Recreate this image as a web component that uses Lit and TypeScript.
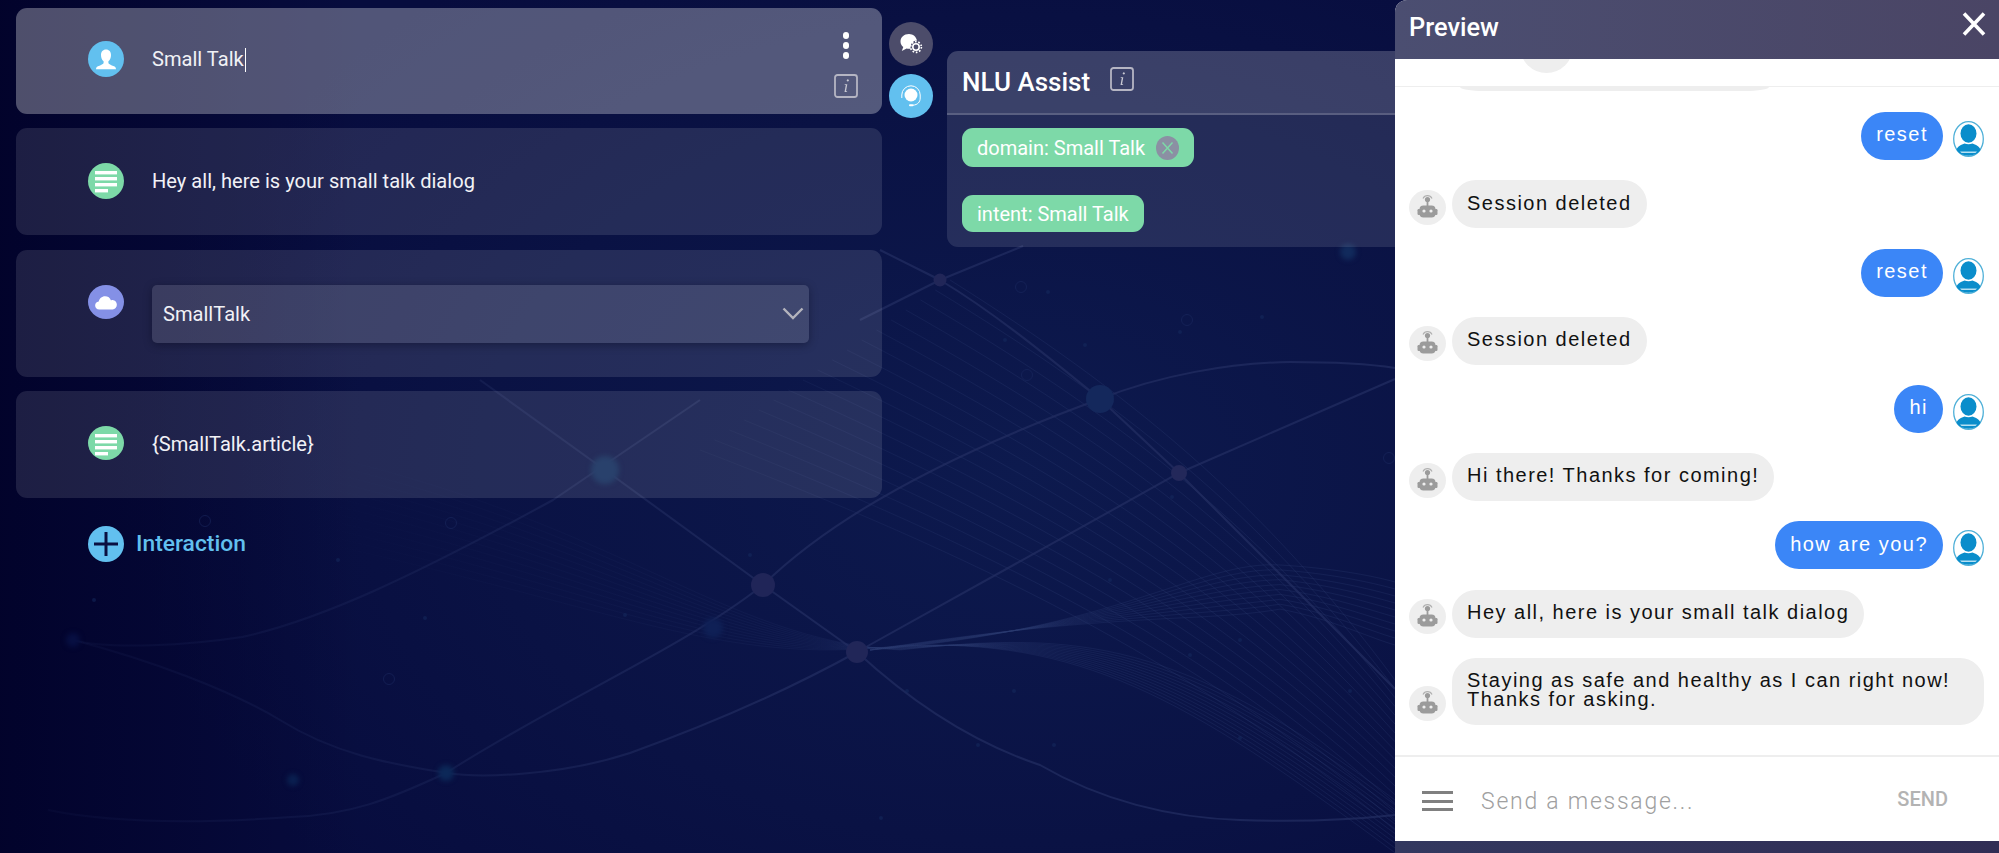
import { LitElement, css, html, svg } from "lit";
import { customElement } from "lit/decorators.js";

interface Message {
  from: "user" | "bot";
  text: string;
}

const MESSAGES: Message[] = [
  { from: "user", text: "reset" },
  { from: "bot", text: "Session deleted" },
  { from: "user", text: "reset" },
  { from: "bot", text: "Session deleted" },
  { from: "user", text: "hi" },
  { from: "bot", text: "Hi there! Thanks for coming!" },
  { from: "user", text: "how are you?" },
  { from: "bot", text: "Hey all, here is your small talk dialog" },
  { from: "bot", text: "Staying as safe and healthy as I can right now! Thanks for asking." },
];

// main lines of the network picture behind the page
const NET_LINES = [
  "M446 773C560 700 680 650 763 585C840 510 960 450 1100 399",
  "M446 773C480 778 560 776 630 753C680 735 770 700 857 652",
  "M446 773C388 800 350 815 291 817C220 822 121 825 48 810",
  "M446 773C400 765 339 757 280 720C230 690 150 660 73 640",
  "M73 640C110 650 190 645 242 637C320 620 412 577 553 500L700 400",
  "M857 652L1179 473L1395 379",
  "M1100 399C1160 375 1230 363 1290 362C1330 362 1370 364 1395 368",
  "M1100 399C1040 350 990 310 940 280L880 250",
  "M860 320L940 280L1023 246",
  "M1100 399L1179 473L1395 689",
  "M857 652C920 710 980 745 1040 765C1100 800 1170 818 1240 820C1300 822 1350 820 1395 815",
  "M763 585L857 652",
  "M763 585L605 470L480 380",
];

const NET_NODES = [
  { x: 1100, y: 399, r: 14, c: "#14285c" },
  { x: 1179, y: 473, r: 8, c: "#23285a" },
  { x: 763, y: 585, r: 12, c: "#202558" },
  { x: 857, y: 652, r: 11, c: "#212658" },
  { x: 940, y: 280, r: 6.5, c: "#212658" },
];

const GLOWS = [
  { x: 446, y: 773, r: 8, c: "#0c2858" },
  { x: 605, y: 470, r: 14, c: "#0f2a5a" },
  { x: 713, y: 628, r: 10, c: "#0f2056" },
  { x: 1348, y: 252, r: 8, c: "#112a5c" },
  { x: 293, y: 780, r: 6, c: "#0a2050" },
  { x: 73, y: 640, r: 7, c: "#070f42" },
];

const RINGS = [
  [1021, 287], [1027, 375], [1187, 320], [1389, 458], [205, 521], [389, 679], [451, 523],
];

const SPECKS = [
  [750, 555], [625, 615], [907, 691], [1014, 691], [1054, 745], [1350, 691],
  [1240, 738], [881, 818], [978, 745], [1240, 640], [1190, 655], [1110, 580],
  [1180, 332], [1048, 292], [1085, 345], [1005, 340], [1262, 317], [1172, 497],
  [338, 560], [94, 600], [425, 618],
];

const fan = () => {
  const paths: string[] = [];
  // long lines that converge towards the lower right
  for (let i = 0; i < 18; i++) {
    const s = i / 17;
    const x0 = 700 + s * 250;
    const y0 = 450 - s * 170;
    const y1 = 830 - s * 150;
    const dx = 1395 - x0;
    const dy = y1 - y0;
    paths.push(`M${x0} ${y0}C${x0 + 0.4 * dx} ${y0 + 0.28 * dy} ${x0 + 0.7 * dx} ${y0 + 0.55 * dy} 1395 ${y1}`);
  }
  for (let i = 0; i < 12; i++) {
    const t = i * 8;
    paths.push(`M300 ${450 + t}C620 ${520 + t} 720 ${640 + t * 0.3} 900 ${650 - t * 0.05}C1080 ${630 + t * 0.1} 1180 ${640 + t * 0.6} 1395 ${800 + t * 0.6}`);
  }
  for (let i = 0; i < 10; i++) {
    const t = i * 7;
    paths.push(`M870 650C1120 ${630 - t * 0.3} 1200 ${560 + t} 1280 ${565 + t * 0.7}C1330 ${568 + t * 0.8} 1370 ${575 + t} 1395 ${582 + t}`);
  }
  return paths;
};

const userSilhouette = html`<svg viewBox="0 0 36 36" width="36" height="36">
  <path fill="#fff" d="M18 8.500c-3.200 0-5 2.400-5 5.400 0 2.700 1 5 2.600 6.300v1.700c0 1-2.700 2.200-5.600 3.300-1.500.6-2 1.800-2 3.100h20c0-1.300-.5-2.500-2-3.100-2.900-1.100-5.600-2.300-5.600-3.300v-1.700c1.600-1.300 2.600-3.600 2.600-6.300 0-3-1.800-5.400-5-5.400z"/>
</svg>`;

const textLines = html`<svg viewBox="0 0 36 36" width="36" height="36" fill="#fff">
  <rect x="7" y="8" width="22" height="3.400"/><rect x="7" y="14" width="22" height="3.400"/>
  <rect x="7" y="20" width="22" height="3.400"/><rect x="7" y="26" width="13" height="3.400"/>
</svg>`;

const cloud = html`<svg viewBox="0 0 36 36" width="36" height="34">
  <path fill="#fff" d="M11 26c-3 0-4.500-2-4.500-4.200 0-2.200 1.500-4 3.800-4.200C11 14.500 13.500 12 17 12c3 0 5.400 1.700 6.300 4.300.5-.2 1-.3 1.700-.3 2.800 0 4.500 2.300 4.500 5 0 2.800-2 5-4.500 5z"/>
</svg>`;

const infoBox = html`<svg viewBox="0 0 24 24" width="24" height="24">
  <rect x="1" y="1" width="22" height="22" rx="2.500" fill="none" stroke="#b5b5c3" stroke-width="1.800"/>
  <path fill="#c9c9d3" d="M12.700 6.400a1.100 1.100 0 1 1 0 .01zM10.800 10.200h2.500l-1.300 7h1.200l-.2.900h-2.500l1.300-7h-1.200z"/>
</svg>`;

const botAvatar = html`<svg viewBox="0 0 37 35" width="37" height="35">
  <ellipse cx="18.500" cy="17.500" rx="18.500" ry="17.500" fill="#eeeeee"/>
  <g fill="#9b9b9b">
    <circle cx="18.500" cy="9.500" r="2.600"/>
    <rect x="17.600" y="10" width="1.800" height="6"/>
    <rect x="10.500" y="15.500" width="16" height="12" rx="4"/>
    <rect x="8.500" y="19" width="3" height="6" rx="1.200"/>
    <rect x="25.500" y="19" width="3" height="6" rx="1.200"/>
  </g>
  <path d="M14 8.500a5 5 0 0 1 9 0" fill="none" stroke="#b0b0b0" stroke-width="1.200"/>
  <circle cx="15" cy="21" r="1.600" fill="#eee"/><circle cx="22" cy="21" r="1.600" fill="#eee"/>
</svg>`;

const userAvatar = html`<svg viewBox="0 0 31 36" width="31" height="36">
  <ellipse cx="15.500" cy="18" rx="14.800" ry="17.300" fill="#fff" stroke="#4fb0d8" stroke-width="1.300"/>
  <ellipse cx="15.500" cy="12.500" rx="8" ry="9.300" fill="#0a8dcb"/>
  <path fill="#0a8dcb" d="M3.500 29c1-4 5-5.500 8-6.500 2.500 1 5.500 1 8 0 3 1 7 2.500 8 6.500-2.500 3.700-7 5.700-12 5.700s-9.500-2-12-5.700z"/>
  <path fill="#b6e0f2" d="M7 30.500h17l-1.500 1.400H8.500z"/>
</svg>`;

@customElement("app-root")
export class AppRoot extends LitElement {
  static styles = css`
    :host {
      display: block;
      width: 1999px;
      height: 853px;
      font-family: Roboto, "Liberation Sans", sans-serif;
      color: #f1f1f6;
    }
    .page {
      position: relative;
      display: flex;
      width: 1999px;
      height: 853px;
      overflow: hidden;
      background:
        linear-gradient(90deg, rgba(1, 1, 40, 0.85) 0, rgba(1, 1, 40, 0) 360px),
        radial-gradient(ellipse 900px 620px at 1020px 470px, #0d1a4e 0, #0a1244 60%, #070c3e 100%);
    }
    .net {
      position: absolute;
      inset: 0;
    }
    .glow {
      filter: blur(2.500px);
    }
    .flows {
      position: relative;
      width: 866px;
      margin: 8px 7px 0 16px;
      flex: none;
    }
    .card {
      display: flex;
      align-items: flex-start;
      gap: 28px;
      padding: 35px 24px 36px 72px;
      margin-bottom: 14.3px;
      border-radius: 11px;
      background: rgba(255, 255, 255, 0.11);
      font-size: 20.100px;
      line-height: 36px;
    }
    .card.active {
      padding-top: 33px;
      padding-bottom: 37px;
      background: rgba(255, 255, 255, 0.3);
    }
    .card.select-card {
      padding-bottom: 34px;
    }
    .dot {
      flex: none;
      width: 36px;
      height: 36px;
      border-radius: 50%;
      overflow: hidden;
    }
    .dot.short {
      height: 34px;
    }
    .blue { background: #62c0ef; }
    .green { background: #7dd9a8; }
    .violet { background: #8490e6; }
    .caret {
      display: inline-block;
      width: 1px;
      height: 24px;
      margin-left: 1px;
      background: #fff;
      vertical-align: -6px;
    }
    .actions {
      display: flex;
      flex-direction: column;
      align-items: center;
      gap: 14px;
      height: 36px;
      margin: -9px 0 0 auto;
    }
    .kebab {
      display: flex;
      flex-direction: column;
      gap: 3.500px;
      padding: 0;
    }
    .kebab i {
      width: 6.500px;
      height: 6.500px;
      border-radius: 50%;
      background: #fff;
    }
    .info { display: block; width: 24px; height: 24px; }
    .select {
      flex: none;
      display: flex;
      align-items: center;
      justify-content: space-between;
      width: 657px;
      height: 58px;
      padding: 0 5px 0 11px;
      box-sizing: border-box;
      border-radius: 5px;
      background: rgba(255, 255, 255, 0.12);
      box-shadow: 0 2px 8px rgba(0, 0, 20, 0.35);
    }
    .add {
      display: flex;
      align-items: center;
      gap: 12px;
      margin: 28px 0 0 72px;
      font-size: 22.800px;
      font-weight: 500;
      color: #62c0ef;
    }
    .add svg { display: block; }
    .side {
      position: relative;
      flex: none;
      display: flex;
      flex-direction: column;
      gap: 8px;
      margin-top: 22px;
    }
    .round {
      display: flex;
      align-items: center;
      justify-content: center;
      width: 44px;
      height: 44px;
      border-radius: 50%;
    }
    .round.gray { background: #4c4c6a; }
    .nlu {
      position: relative;
      flex: 1;
      height: 196px;
      margin: 51px -14px 0 14px;
      border-radius: 11px;
      background: rgba(255, 255, 255, 0.11);
      overflow: hidden;
    }
    .nlu-head {
      display: flex;
      align-items: flex-start;
      height: 62px;
      padding-left: 15px;
      background: rgba(255, 255, 255, 0.1);
      border-bottom: 2px solid rgba(255, 255, 255, 0.16);
    }
    .nlu-head h2 {
      margin: 0;
      font-size: 26px;
      font-weight: 500;
      line-height: 62px;
      color: #fff;
    }
    .nlu-head .info { margin: 16px 0 0 20px; }
    .chips {
      display: flex;
      flex-direction: column;
      align-items: flex-start;
      gap: 28px;
      padding: 13px 0 0 15px;
    }
    .chip {
      display: flex;
      align-items: center;
      gap: 11px;
      height: 39px;
      padding: 0 15px 0 15px;
      border-radius: 11px;
      background: #7dd9a8;
      font-size: 20px;
      color: #fff;
    }
    .chip.plain {
      height: 37px;
    }
    .chip svg { display: block; }
    .panel {
      position: relative;
      flex: none;
      display: flex;
      flex-direction: column;
      width: 604px;
      height: 853px;
      margin-left: auto;
      background: #fff;
      border-top-left-radius: 12px;
      overflow: hidden;
    }
    .panel-head {
      flex: none;
      display: flex;
      align-items: flex-start;
      justify-content: space-between;
      height: 59px;
      padding: 0 13px 0 14px;
      box-sizing: border-box;
      background: linear-gradient(90deg, #4b4e71, #4a4565);
      color: #fff;
      font-size: 25.400px;
      font-weight: 500;
      line-height: 55px;
    }
    .panel-head svg { display: block; margin-top: 12px; }
    .stub {
      flex: none;
      height: 28px;
      overflow: hidden;
      border-bottom: 1px solid #eeeeee;
      box-sizing: border-box;
    }
    .stub i {
      display: block;
      width: 53px;
      height: 53px;
      margin: -39px 0 0 125px;
      border-radius: 50%;
      background: #eeeeee;
    }
    .log {
      flex: 1;
      display: flex;
      flex-direction: column;
      gap: 20.200px;
      min-height: 0;
      overflow: hidden;
      font-family: "Liberation Sans", Arial, sans-serif;
      font-size: 20px;
      letter-spacing: 1.480px;
      line-height: 19.500px;
    }
    .old-bubble {
      flex: none;
      width: 309px;
      height: 4px;
      margin: 0 0 1px 65px;
      border-radius: 0 0 24px 24px / 0 0 4px 4px;
      background: #eeeeee;
    }
    .msg {
      flex: none;
      display: flex;
      align-items: flex-end;
      padding: 0 15px 0 14px;
    }
    .msg.user { justify-content: flex-end; }
    .msg svg { display: block; flex: none; margin-bottom: 3.500px; }
    .msg.user svg { margin: 0 0 3px 10px; }
    .msg.bot svg { margin-right: 6px; }
    .bubble {
      display: flex;
      align-items: center;
      min-height: 48px;
      padding: 0 15px 2px;
      box-sizing: border-box;
      border-radius: 24px;
    }
    .msg.bot .bubble {
      background: #eeeeee;
      color: #111;
    }
    .msg.user .bubble {
      background: #3b86f7;
      color: #fff;
    }
    .msg.long .bubble {
      min-height: 67px;
    }
    .composer {
      flex: none;
      display: flex;
      align-items: center;
      height: 86px;
      padding: 0 51px 0 27px;
      box-sizing: border-box;
      border-top: 2px solid #eeeeee;
      background: #fff;
    }
    .burger {
      display: flex;
      flex-direction: column;
      gap: 5.500px;
      width: 31px;
      margin-top: 4px;
    }
    .burger i {
      height: 3px;
      background: #808080;
    }
    .placeholder {
      flex: 1;
      margin: 4px 0 0 28px;
      font-size: 23px;
      font-weight: 300;
      letter-spacing: 1.750px;
      color: #a0a0a0;
    }
    .send {
      font-size: 20px;
      font-weight: 500;
      color: #b3b3b3;
    }
    .panel-foot {
      flex: none;
      height: 12px;
      background: linear-gradient(90deg, #33385f, #302d55);
    }
  `;

  private _net() {
    return svg`
      <defs>
        <linearGradient id="fade-main" gradientUnits="userSpaceOnUse" x1="0" y1="0" x2="800" y2="0">
          <stop offset="0" stop-color="#232e62" stop-opacity="0.08"/>
          <stop offset="0.55" stop-color="#232e62" stop-opacity="0.35"/>
          <stop offset="1" stop-color="#232e62" stop-opacity="0.7"/>
        </linearGradient>
        <linearGradient id="fade-fan" gradientUnits="userSpaceOnUse" x1="300" y1="0" x2="1000" y2="0">
          <stop offset="0" stop-color="#2a3a70" stop-opacity="0"/>
          <stop offset="0.6" stop-color="#2a3a70" stop-opacity="0.14"/>
          <stop offset="1" stop-color="#2a3a70" stop-opacity="0.3"/>
        </linearGradient>
      </defs>
      ${fan().map((d) => svg`<path d=${d} fill="none" stroke="url(#fade-fan)" stroke-width="1"/>`)}
      ${NET_LINES.map((d) => svg`<path d=${d} fill="none" stroke="url(#fade-main)" stroke-width="2"/>`)}
      ${RINGS.map(([x, y]) => svg`<circle cx=${x} cy=${y} r="5.500" fill="none" stroke="#1c2a60" stroke-opacity="0.55"/>`)}
      ${SPECKS.map(([x, y]) => svg`<circle cx=${x} cy=${y} r="2" fill="#162c60" fill-opacity="0.5"/>`)}
      ${GLOWS.map((n) => svg`<circle class="glow" cx=${n.x} cy=${n.y} r=${n.r} fill=${n.c}/>`)}
      ${NET_NODES.map((n) => svg`<circle cx=${n.x} cy=${n.y} r=${n.r} fill=${n.c}/>`)}
    `;
  }

  private _message(m: Message) {
    if (m.from === "user") {
      return html`<div class="msg user"><div class="bubble">${m.text}</div>${userAvatar}</div>`;
    }
    return html`<div class="msg bot ${m.text.length > 50 ? "long" : ""}">${botAvatar}<div class="bubble">${m.text}</div></div>`;
  }

  render() {
    return html`
      <div class="page">
        <svg class="net" width="1999" height="853" viewBox="0 0 1999 853">${this._net()}</svg>

        <div class="flows">
          <div class="card active">
            <div class="dot blue">${userSilhouette}</div>
            <div>Small Talk<span class="caret"></span></div>
            <div class="actions">
              <div class="kebab"><i></i><i></i><i></i></div>
              <div class="info">${infoBox}</div>
            </div>
          </div>
          <div class="card">
            <div class="dot green">${textLines}</div>
            <div>Hey all, here is your small talk dialog</div>
          </div>
          <div class="card select-card">
            <div class="dot short violet">${cloud}</div>
            <div class="select">
              <span>SmallTalk</span>
              <svg width="22" height="13" viewBox="0 0 22 13"><path d="M1.500 1.500L11 11l9.500-9.500" fill="none" stroke="#b4b4bd" stroke-width="2.400"/></svg>
            </div>
          </div>
          <div class="card">
            <div class="dot short green">${textLines}</div>
            <div>{SmallTalk.article}</div>
          </div>
          <div class="add">
            <svg width="36" height="36" viewBox="0 0 36 36">
              <circle cx="18" cy="18" r="18" fill="#62c0ef"/>
              <path d="M18 6v24M6 18h24" stroke="#0a1040" stroke-width="3"/>
            </svg>
            <span>Interaction</span>
          </div>
        </div>

        <div class="side">
          <div class="round gray">
            <svg width="28" height="28" viewBox="0 0 28 28">
              <path fill="#fff" d="M12 4C7 4 3.500 7.200 3.500 11.500c0 2.300 1 4.200 2.800 5.500l-1.500 4 4.800-2.500c.7.200 1.500.3 2.400.3.600 0 1.100-.1 1.600-.2A6.500 6.500 0 0 1 20 10.600C19.200 6.800 16 4 12 4z"/>
              <circle cx="19" cy="17" r="3.200" fill="none" stroke="#fff" stroke-width="1.600"/>
              <circle cx="19" cy="17" r="5.400" fill="none" stroke="#fff" stroke-width="1.600" stroke-dasharray="1.700 1.690"/>
            </svg>
          </div>
          <div class="round blue">
            <svg width="24" height="24" viewBox="0 0 24 24">
              <circle cx="12" cy="11" r="6.500" fill="#fff"/>
              <path d="M2.800 14V11a9.200 9.200 0 0 1 18.400 0v3" fill="none" stroke="#fff" stroke-width="1"/>
              <path d="M21.200 14c0 4-2.500 6.800-7.200 7.200" fill="none" stroke="#fff" stroke-width="1"/>
              <rect x="10" y="20.200" width="4.500" height="2" rx="1" fill="#fff"/>
            </svg>
          </div>
        </div>

        <div class="nlu">
          <div class="nlu-head">
            <h2>NLU Assist</h2>
            <div class="info">${infoBox}</div>
          </div>
          <div class="chips">
            <div class="chip">
              <span>domain: Small Talk</span>
              <svg width="23" height="24" viewBox="0 0 23 24">
                <ellipse cx="11.500" cy="12" rx="11.500" ry="12" fill="#8b90a3"/>
                <path d="M6.500 6.500l10 11M16.500 6.500l-10 11" stroke="#7dd9a8" stroke-width="1.500"/>
              </svg>
            </div>
            <div class="chip plain"><span>intent: Small Talk</span></div>
          </div>
        </div>

        <div class="panel">
          <div class="panel-head">
            <span>Preview</span>
            <svg width="24" height="24" viewBox="0 0 24 24"><path d="M2 1.500l20 21M22 1.500l-20 21" stroke="#fff" stroke-width="3.600"/></svg>
          </div>
          <div class="stub"><i></i></div>
          <div class="log">
            <div class="old-bubble"></div>
            ${MESSAGES.map((m) => this._message(m))}
          </div>
          <div class="composer">
            <div class="burger"><i></i><i></i><i></i></div>
            <div class="placeholder">Send a message...</div>
            <div class="send">SEND</div>
          </div>
          <div class="panel-foot"></div>
        </div>
      </div>
    `;
  }
}
